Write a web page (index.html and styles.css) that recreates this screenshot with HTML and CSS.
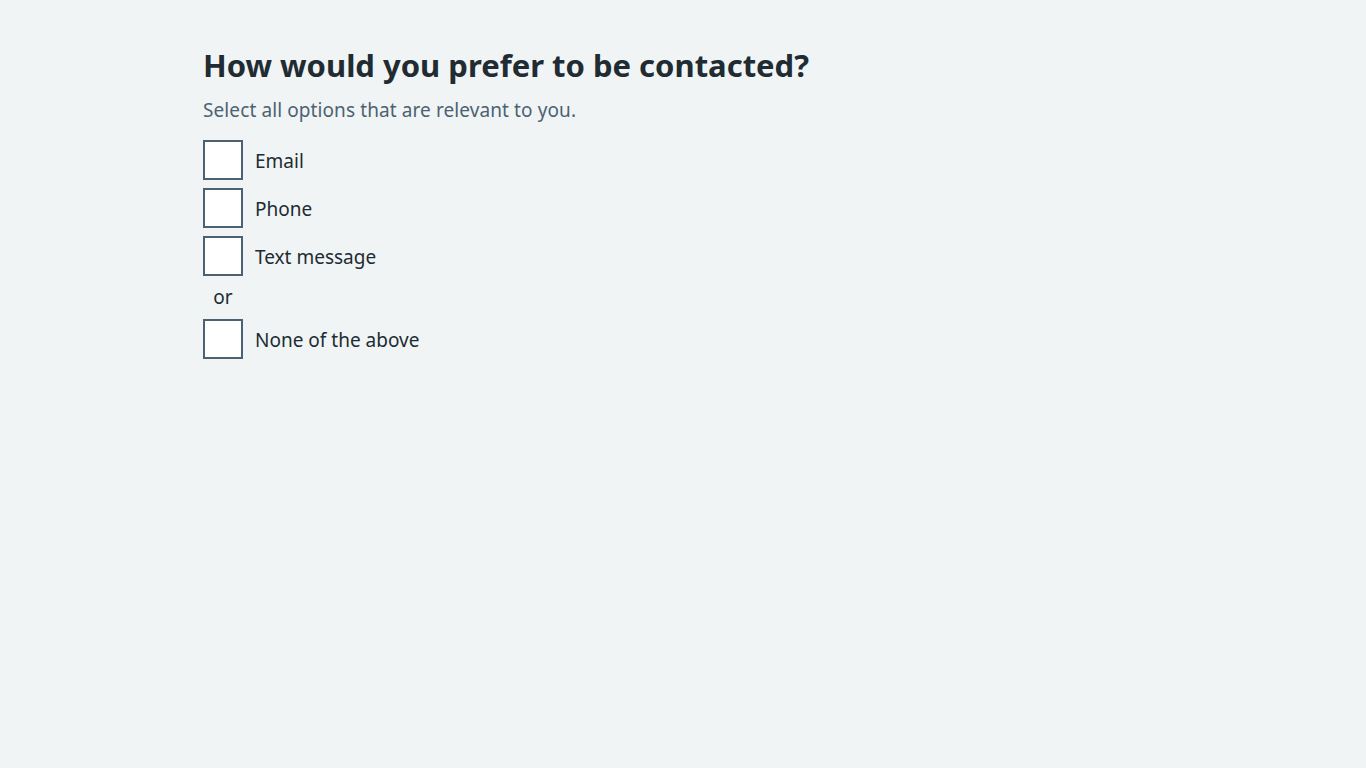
FILE: index.html
```html
<!DOCTYPE html>
<html lang="en">
<head>
<meta charset="utf-8">
<title>Contact preference</title>
<link rel="stylesheet" href="styles.css">
</head>
<body>
<main class="container">
  <fieldset class="fieldset">
    <legend class="legend"><h1 class="heading">How would you prefer to be contacted?</h1></legend>
    <div class="hint">Select all options that are relevant to you.</div>
    <div class="checkboxes">
      <div class="item"><span class="box"></span><span class="label">Email</span></div>
      <div class="item"><span class="box"></span><span class="label">Phone</span></div>
      <div class="item"><span class="box"></span><span class="label">Text message</span></div>
      <div class="divider">or</div>
      <div class="item"><span class="box"></span><span class="label">None of the above</span></div>
    </div>
  </fieldset>
</main>
</body>
</html>
```
FILE: styles.css
```css
html, body {
  margin: 0;
  padding: 0;
  background: #f0f4f5;
  color: #212b32;
  font-family: "Noto Sans", "Open Sans", sans-serif;
}
.container {
  max-width: 960px;
  margin: 0 auto;
  padding-top: 41px;
}
.fieldset {
  border: 0;
  margin: 0;
  padding: 0;
}
.legend {
  padding: 0;
  margin: 0 0 7px;
}
.heading {
  font-size: 31px;
  line-height: 48px;
  font-weight: 700;
  margin: 0;
  color: #212b32;
}
.hint {
  font-size: 19px;
  line-height: 28px;
  letter-spacing: 0.1px;
  color: #4c6272;
  margin-bottom: 16px;
}
.checkboxes {
  display: flex;
  flex-direction: column;
  gap: 8px;
}
.item {
  display: flex;
  align-items: center;
}
.box {
  width: 36px;
  height: 36px;
  border: 2px solid #4c6272;
  background: #fff;
  flex: none;
}
.label {
  font-size: 19px;
  line-height: 28px;
  padding: 2px 12px 0;
  color: #212b32;
}
.divider {
  width: 40px;
  text-align: center;
  font-size: 19px;
  line-height: 27px;
  color: #212b32;
}
```
